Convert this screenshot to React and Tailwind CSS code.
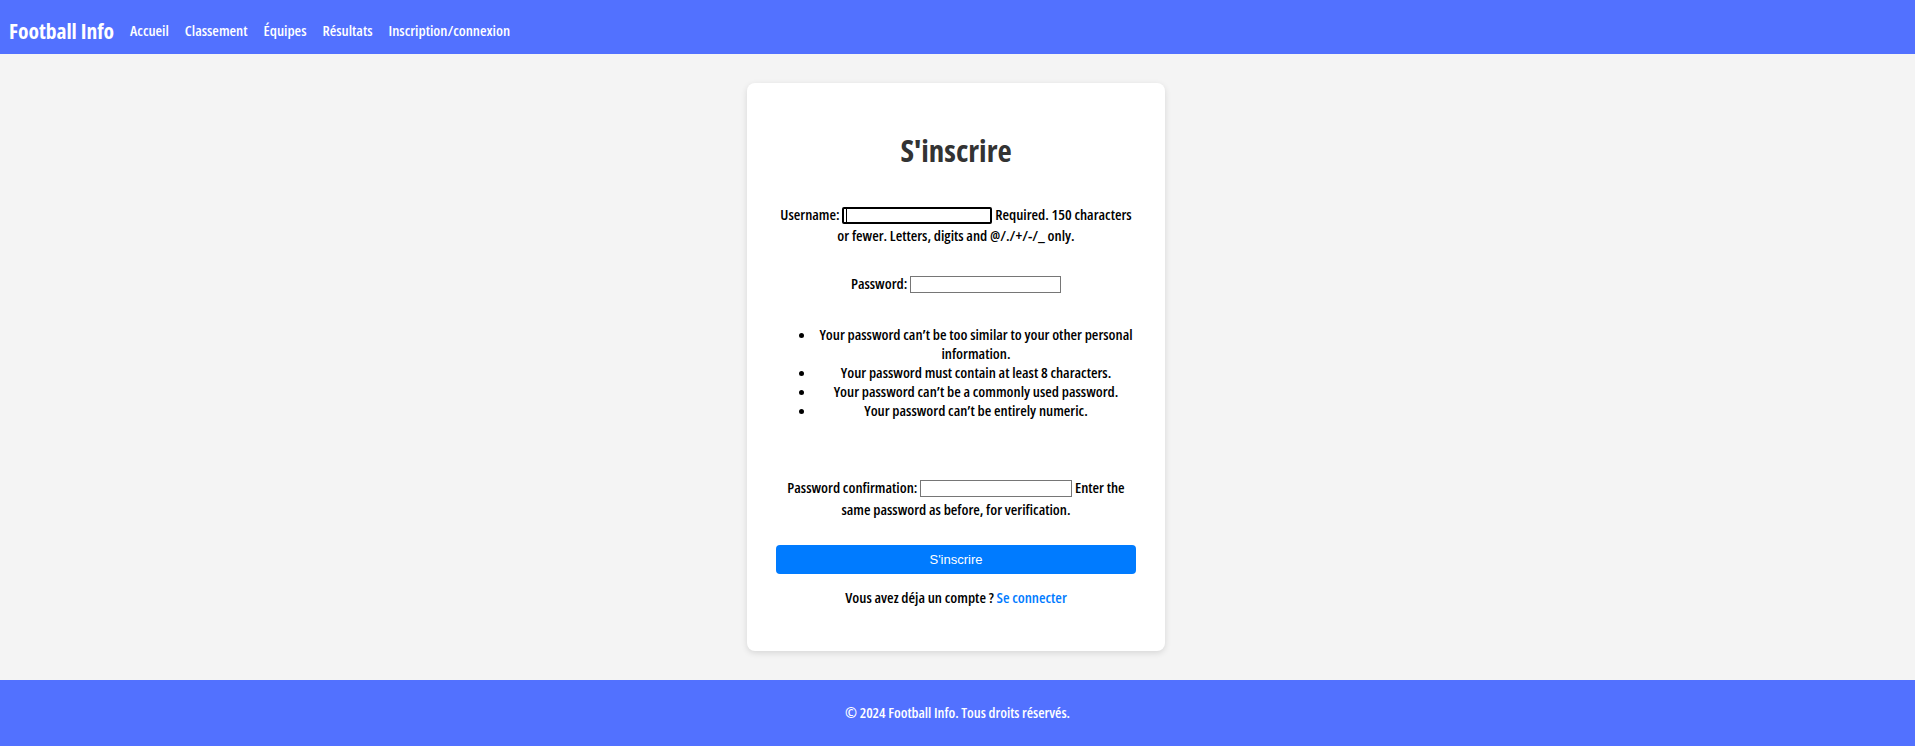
import React from 'react';

const font = "font-['Open_Sans','Roboto',sans-serif] font-stretch-[75%]";

const NavBar = () => {
  const links = ['Accueil', 'Classement', 'Équipes', 'Résultats', 'Inscription/connexion'];
  return (
    <nav className="h-[54px] bg-[#5271ff] flex items-center pl-[9px] pt-[7px] text-white">
      <span className="text-[21.5px] font-bold leading-none mr-[16px]">Football Info</span>
      <ul className="flex items-center gap-[16px] text-[15px] font-semibold">
        {links.map((l) => (
          <li key={l}>
            <a href="#">{l}</a>
          </li>
        ))}
      </ul>
    </nav>
  );
};

const helpItems = [
  ["Your password can’t be too similar to your other personal", 'information.'],
  ['Your password must contain at least 8 characters.'],
  ['Your password can’t be a commonly used password.'],
  ['Your password can’t be entirely numeric.'],
];

const RegisterCard = () => {
  return (
    <div className="w-[418px] h-[568px] bg-white rounded-[8px] shadow-[0_2px_6px_rgba(0,0,0,0.12)] px-[29px] pt-[45px] text-[15px] font-semibold text-black">
      <h2 className="text-[31px] leading-[44px] font-bold text-[#333] text-center">S'inscrire</h2>
      <form className="text-center">
        <div className="mt-[32px] leading-[21px]">
          <div className="whitespace-nowrap">
            <label>Username:</label>{' '}
            <input
              type="text"
              className="w-[150px] h-[17px] align-middle border-2 border-black rounded-[2px] shadow-[inset_2px_0_0_white,inset_3px_0_0_black]"
            />{' '}
            <span>Required. 150 characters</span>
          </div>
          <div className="whitespace-nowrap">or fewer. Letters, digits and @/./+/-/_ only.</div>
        </div>
        <div className="mt-[27px] leading-[21px] whitespace-nowrap">
          <label>Password:</label>{' '}
          <input type="password" className="w-[151px] h-[17px] align-middle border border-[#767676]" />
        </div>
        <ul className="mt-[31px] pl-[40px] list-disc leading-[19px]">
          {helpItems.map((lines, idx) => (
            <li key={idx} className="text-center">
              {lines.map((t, i) => (
                <span key={i} className="block whitespace-nowrap">
                  {t}
                </span>
              ))}
            </li>
          ))}
        </ul>
        <div className="mt-[56px] leading-[22px]">
          <div className="whitespace-nowrap">
            <label>Password confirmation:</label>{' '}
            <input type="password" className="w-[152px] h-[17px] align-middle border border-[#767676]" />{' '}
            <span>Enter the</span>
          </div>
          <div className="whitespace-nowrap">same password as before, for verification.</div>
        </div>
        <button
          type="button"
          className="mt-[25px] w-full h-[29px] bg-[#007bff] text-white rounded-[4px] text-[13px] font-normal font-stretch-normal font-['Liberation_Sans',Arial,sans-serif]"
        >
          S'inscrire
        </button>
        <p className="mt-[14px] leading-[19px]">
          Vous avez déja un compte ? <a href="#" className="text-[#007bff]">Se connecter</a>
        </p>
      </form>
    </div>
  );
};

const App = () => {
  return (
    <div className={`min-h-screen flex flex-col bg-[#f4f4f4] ${font}`}>
      <NavBar />
      <main className="flex-1 flex justify-center items-start py-[29px] pr-[3px]">
        <RegisterCard />
      </main>
      <footer className="h-[66px] bg-[#5271ff] flex items-center justify-center text-white text-[14.5px] font-semibold">
        © 2024 Football Info. Tous droits réservés.
      </footer>
    </div>
  );
};

export default App;
